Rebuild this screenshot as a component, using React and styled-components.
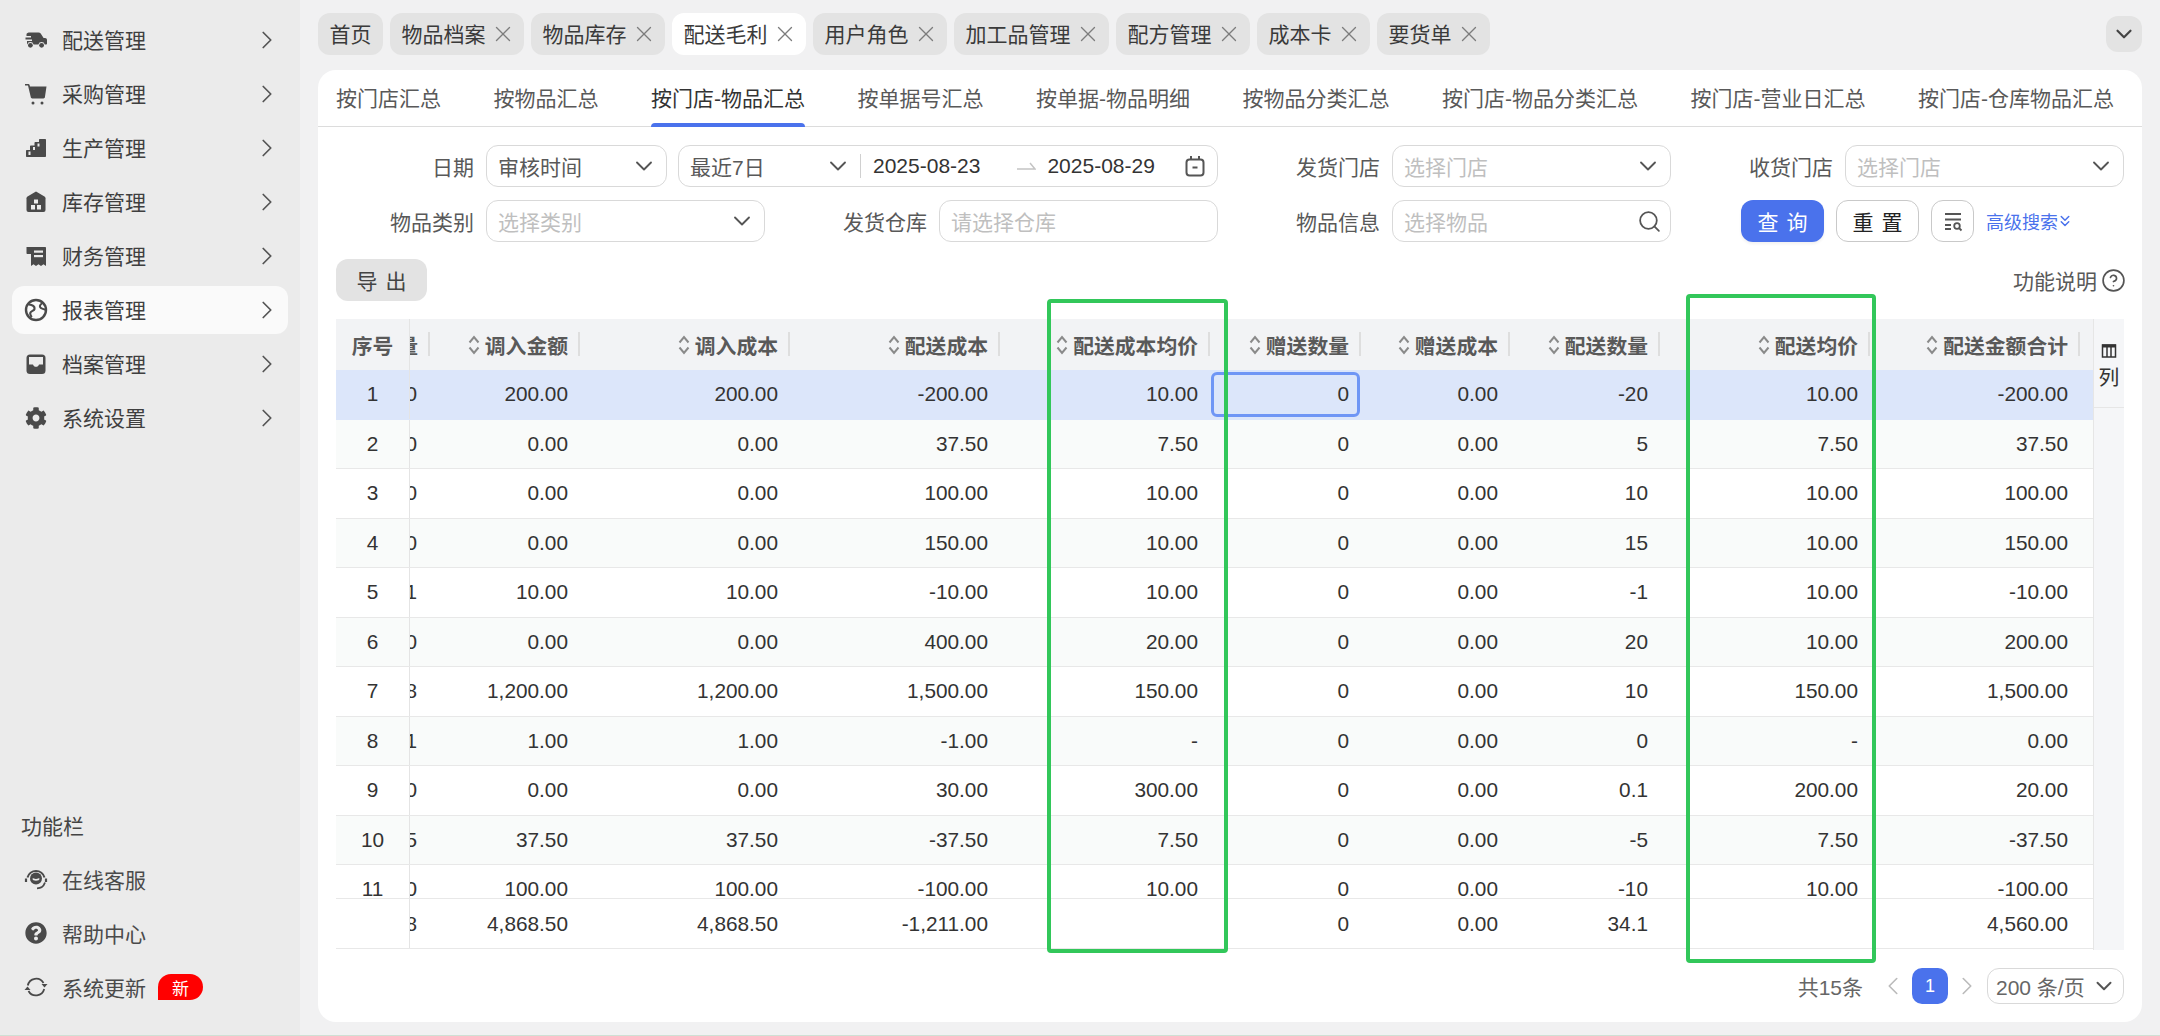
import React from "react";
import styled, { createGlobalStyle } from "styled-components";
import { ChevronRight, ChevronDown, ChevronLeft, ChevronsDown, X, Search, CircleHelp } from "lucide-react";
import { FaCog, FaQuestionCircle } from "react-icons/fa";

const SIDE_BG = "#ebebeb";

const navItems = [
  { label: "配送管理", icon: "truck" },
  { label: "采购管理", icon: "cart" },
  { label: "生产管理", icon: "stairs" },
  { label: "库存管理", icon: "house" },
  { label: "财务管理", icon: "receipt" },
  { label: "报表管理", icon: "globe", active: true },
  { label: "档案管理", icon: "inbox" },
  { label: "系统设置", icon: "gear" },
];

const pageTabs = [
  { label: "首页", fixed: true },
  { label: "物品档案" },
  { label: "物品库存" },
  { label: "配送毛利", active: true },
  { label: "用户角色" },
  { label: "加工品管理" },
  { label: "配方管理" },
  { label: "成本卡" },
  { label: "要货单" },
];

const subTabs = [
  "按门店汇总",
  "按物品汇总",
  "按门店-物品汇总",
  "按单据号汇总",
  "按单据-物品明细",
  "按物品分类汇总",
  "按门店-物品分类汇总",
  "按门店-营业日汇总",
  "按门店-仓库物品汇总",
];

const columns = [
  { title: "调入数量", width: 20, clip: true },
  { title: "调入金额", width: 150 },
  { title: "调入成本", width: 210 },
  { title: "配送成本", width: 210 },
  { title: "配送成本均价", width: 210 },
  { title: "赠送数量", width: 151 },
  { title: "赠送成本", width: 149 },
  { title: "配送数量", width: 150 },
  { title: "配送均价", width: 210 },
  { title: "配送金额合计", width: 210 },
];

const rows = [
  ["20", "200.00", "200.00", "-200.00", "10.00", "0", "0.00", "-20", "10.00", "-200.00"],
  ["0", "0.00", "0.00", "37.50", "7.50", "0", "0.00", "5", "7.50", "37.50"],
  ["0", "0.00", "0.00", "100.00", "10.00", "0", "0.00", "10", "10.00", "100.00"],
  ["0", "0.00", "0.00", "150.00", "10.00", "0", "0.00", "15", "10.00", "150.00"],
  ["1", "10.00", "10.00", "-10.00", "10.00", "0", "0.00", "-1", "10.00", "-10.00"],
  ["0", "0.00", "0.00", "400.00", "20.00", "0", "0.00", "20", "10.00", "200.00"],
  ["8", "1,200.00", "1,200.00", "1,500.00", "150.00", "0", "0.00", "10", "150.00", "1,500.00"],
  ["1", "1.00", "1.00", "-1.00", "-", "0", "0.00", "0", "-", "0.00"],
  ["0", "0.00", "0.00", "30.00", "300.00", "0", "0.00", "0.1", "200.00", "20.00"],
  ["5", "37.50", "37.50", "-37.50", "7.50", "0", "0.00", "-5", "7.50", "-37.50"],
  ["10", "100.00", "100.00", "-100.00", "10.00", "0", "0.00", "-10", "10.00", "-100.00"],
];

const summary = ["48", "4,868.50", "4,868.50", "-1,211.00", "", "0", "0.00", "34.1", "", "4,560.00"];

function NavIcon({ name }) {
  const hole = name === "globe" ? "#fafafa" : SIDE_BG;
  if (name === "gear") return <FaCog size={22} />;
  return (
    <svg width="24" height="24" viewBox="0 0 24 24" fill="currentColor">
      {name === "truck" && (
        <>
          <path d="M6 4.5h8.5c.9 0 1.7.4 2.2 1.1L19.6 10H21c1.2 0 2 .9 2 2v3.5c0 .6-.4 1-1 1h-1.2a3.3 3.3 0 0 0-6.4 0H9.6a3.3 3.3 0 0 0-6.4 0H3V13h5v-1.5H1.5V9.5H7V8H2.5V6.2C2.5 5.2 4 4.5 6 4.5z" />
          <circle cx="6.4" cy="17.3" r="2.4" />
          <circle cx="17.6" cy="17.3" r="2.4" />
        </>
      )}
      {name === "cart" && (
        <>
          <path d="M1 2h3.400c.6 0 1 .4 1.200 1L6 4.500h16.500l-1.600 10.800c-.1.7-.7 1.200-1.400 1.200H8.200c-.7 0-1.300-.5-1.400-1.200L4 3.600H1z" />
          <circle cx="9" cy="21" r="1.500" />
          <circle cx="18" cy="21" r="1.500" />
        </>
      )}
      {name === "stairs" && (
        <>
          <path d="M16 3h5c.6 0 1 .4 1 1v16c0 .6-.4 1-1 1H3c-.6 0-1-.4-1-1v-5c0-.6.4-1 1-1h3v-3.500c0-.6.4-1 1-1h3.500V7c0-.6.4-1 1-1H15V4c0-.6.4-1 1-1z" />
          <rect x="4.500" y="15.500" width="2" height="3.500" fill={hole} />
          <rect x="9" y="11" width="2" height="3" fill={hole} />
          <rect x="13.500" y="7.500" width="2" height="3" fill={hole} />
        </>
      )}
      {name === "house" && (
        <>
          <path d="M12 1.500l8.500 5c.6.4 1 1 1 1.800V20a2 2 0 0 1-2 2h-15a2 2 0 0 1-2-2V8.300c0-.8.4-1.400 1-1.800z" />
          <rect x="10" y="9.500" width="4" height="4" fill={hole} />
          <rect x="7" y="15" width="4" height="4.500" fill={hole} />
          <rect x="13" y="15" width="4" height="4.500" fill={hole} />
        </>
      )}
      {name === "receipt" && (
        <>
          <path d="M2.500 3h18.500c.6 0 1 .4 1 1v18l-2.500-1.800L17 22l-2.500-1.800L12 22l-2.500-1.800L7 22V10H3.500c-.6 0-1-.4-1-1z" />
          <rect x="10" y="6.500" width="9" height="2.200" fill={hole} />
          <rect x="10" y="11" width="9" height="2.200" fill={hole} />
        </>
      )}
      {name === "globe" && (
        <g fill="none" stroke="currentColor">
          <circle cx="12" cy="12" r="10" strokeWidth="2.400" />
          <path d="M5 6.500c3.500.3 6 2 5.500 4.500-.4 2-4 1.800-4.300 4.200-.1 1.300.5 2.800 1.500 4" strokeWidth="2.200" />
          <path d="M18.500 5c-2 1.200-3 2.500-2.500 4 .6 2 3.500 1.500 5.500 3" strokeWidth="2" />
        </g>
      )}
      {name === "inbox" && (
        <>
          <rect x="2.500" y="2.500" width="19" height="19.500" rx="3.500" />
          <path d="M5 5h14v7.500h-4c-.5 1.500-1.600 2.300-3 2.300s-2.500-.8-3-2.300H5z" fill={hole} />
        </>
      )}
    </svg>
  );
}

function AgentIcon() {
  return (
    <svg width="26" height="26" viewBox="0 0 24 24" fill="none" stroke="currentColor">
      <path d="M3.500 10.500a8.800 8.800 0 0 1 17 0" strokeWidth="2" />
      <path d="M2 11.500v3.500M22 11.500v3.500" strokeWidth="2.200" />
      <path d="M21 15.500c-1.200 3.500-4.500 5.800-8 5.800" strokeWidth="1.800" />
      <circle cx="12" cy="11.500" r="6" fill="currentColor" strokeWidth="0" />
      <path d="M9 11.500c.6 1.800 5.400 1.800 6 0" stroke={SIDE_BG} strokeWidth="1.800" />
    </svg>
  );
}

function UpdateIcon() {
  return (
    <svg width="26" height="26" viewBox="0 0 24 24" fill="currentColor" stroke="none">
      <g fill="none" stroke="currentColor" strokeWidth="1.800">
        <path d="M3.800 10.500A8.500 8.500 0 0 1 19.500 8" />
        <path d="M20.200 14A8.500 8.500 0 0 1 4.500 16" />
      </g>
      <path d="M17.500 9h6l-3 3.500z" />
      <path d="M.5 15h6l-3-3.500z" />
    </svg>
  );
}

function SortIcon() {
  return (
    <svg width="12" height="22" viewBox="0 0 12 22" fill="none" stroke="#8a8a8a" strokeWidth="2">
      <path d="M1.500 8.500L6 3l4.500 5.500" />
      <path d="M1.500 13.500L6 19l4.500-5.500" />
    </svg>
  );
}

function CalendarIcon() {
  return (
    <svg width="24" height="24" viewBox="0 0 24 24" fill="none" stroke="#555" strokeWidth="2">
      <rect x="3.500" y="5.500" width="17" height="16" rx="3" />
      <path d="M8 2v4M16 2v4M9.500 13.500h5" />
    </svg>
  );
}

function RangeArrow() {
  return (
    <svg width="20" height="12" viewBox="0 0 20 12" fill="none" stroke="#c4c4c4" strokeWidth="1.500">
      <path d="M1 9h18L14 3" />
    </svg>
  );
}

function FilterSearchIcon() {
  return (
    <svg width="22" height="22" viewBox="0 0 22 22" fill="none" stroke="#555" strokeWidth="1.800">
      <path d="M3 4h16M3 9.500h16M3 15h6M3 19h6" />
      <circle cx="15" cy="16" r="2.800" />
      <path d="M17 18l2.500 2.500" />
    </svg>
  );
}

function ColumnsIcon() {
  return (
    <svg width="16" height="16" viewBox="0 0 16 16" fill="none" stroke="#333" strokeWidth="1.500">
      <rect x="1.500" y="2" width="13" height="12" />
      <path d="M1 3h14" strokeWidth="3" />
      <path d="M6 3v11M10 3v11" />
    </svg>
  );
}

function SelectArrow() {
  return <ArrowBox size={28} strokeWidth={1.6} color="#555" />;
}

export default function App() {
  return (
    <Page>
      <GlobalStyle />
      <Sidebar>
        <NavList>
          {navItems.map((item) => (
            <NavItem key={item.label} $active={item.active}>
              <NavIconBox>
                <NavIcon name={item.icon} />
              </NavIconBox>
              <NavLabel>{item.label}</NavLabel>
              <ChevronRight size={30} strokeWidth={1.4} color="#555" />
            </NavItem>
          ))}
        </NavList>
        <ToolList>
          <ToolTitle>功能栏</ToolTitle>
          <ToolItem>
            <NavIconBox>
              <AgentIcon />
            </NavIconBox>
            在线客服
          </ToolItem>
          <ToolItem>
            <NavIconBox>
              <FaQuestionCircle size={22} />
            </NavIconBox>
            帮助中心
          </ToolItem>
          <ToolItem>
            <NavIconBox>
              <UpdateIcon />
            </NavIconBox>
            系统更新
            <NewBadge>新</NewBadge>
          </ToolItem>
        </ToolList>
      </Sidebar>

      <Main>
        <TabStrip>
          <TabList>
            {pageTabs.map((tab) => (
              <PageTab key={tab.label} $active={tab.active}>
                {tab.label}
                {!tab.fixed && <TabClose size={26} strokeWidth={1.25} color="#7d7d7d" />}
              </PageTab>
            ))}
          </TabList>
          <TabMenu>
            <ChevronDown size={26} strokeWidth={2} color="#444" />
          </TabMenu>
        </TabStrip>

        <Card>
          <SubTabs>
            {subTabs.map((tab) => (
              <SubTab key={tab} $active={tab === "按门店-物品汇总"}>
                {tab}
              </SubTab>
            ))}
          </SubTabs>

          <CardBody>
            <FilterGrid>
              <FilterCell $wide>
                <FieldLabel>日期</FieldLabel>
                <Field $w={181}>
                  <FieldValue>审核时间</FieldValue>
                  <SelectArrow />
                </Field>
                <RangeField>
                  <RangeRecent>最近7日</RangeRecent>
                  <SelectArrow />
                  <RangeDivider />
                  <RangeDate>2025-08-23</RangeDate>
                  <RangeArrowBox>
                    <RangeArrow />
                  </RangeArrowBox>
                  <RangeDate>2025-08-29</RangeDate>
                  <RangeCalendar>
                    <CalendarIcon />
                  </RangeCalendar>
                </RangeField>
              </FilterCell>
              <FilterCell>
                <FieldLabel>发货门店</FieldLabel>
                <Field>
                  <Placeholder>选择门店</Placeholder>
                  <SelectArrow />
                </Field>
              </FilterCell>
              <FilterCell>
                <FieldLabel>收货门店</FieldLabel>
                <Field>
                  <Placeholder>选择门店</Placeholder>
                  <SelectArrow />
                </Field>
              </FilterCell>

              <FilterCell>
                <FieldLabel>物品类别</FieldLabel>
                <Field>
                  <Placeholder>选择类别</Placeholder>
                  <SelectArrow />
                </Field>
              </FilterCell>
              <FilterCell>
                <FieldLabel>发货仓库</FieldLabel>
                <Field>
                  <Placeholder>请选择仓库</Placeholder>
                </Field>
              </FilterCell>
              <FilterCell>
                <FieldLabel>物品信息</FieldLabel>
                <Field>
                  <Placeholder>选择物品</Placeholder>
                  <Search size={25} strokeWidth={1.7} color="#555" />
                </Field>
              </FilterCell>
              <ActionCell>
                <PrimaryButton>查 询</PrimaryButton>
                <OutlineButton>重 置</OutlineButton>
                <IconButton>
                  <FilterSearchIcon />
                </IconButton>
                <AdvancedLink>
                  高级搜索
                  <AdvancedArrow size={18} strokeWidth={2} />
                </AdvancedLink>
              </ActionCell>
            </FilterGrid>

            <Toolbar>
              <ExportButton>导 出</ExportButton>
              <HelpLink>
                功能说明
                <HelpIcon size={25} strokeWidth={1.6} color="#555" />
              </HelpLink>
            </Toolbar>

            <TableWrap>
              <TableMain>
                <HeadRow>
                  <IndexHead>序号</IndexHead>
                  {columns.map((col) => (
                    <HeadCell key={col.title} $w={col.width}>
                      {!col.clip && <SortIcon />}
                      <span>{col.clip ? "数量" : col.title}</span>
                    </HeadCell>
                  ))}
                  <EndCell />
                </HeadRow>
                <RowsBox>
                  {rows.map((row, i) => (
                    <BodyRow key={i} $selected={i === 0} $striped={i % 2 === 1}>
                      <IndexCell>{i + 1}</IndexCell>
                      {row.map((val, j) => (
                        <DataCell key={j} $w={columns[j].width} $clip={columns[j].clip} $focused={i === 0 && j === 5}>
                          {val}
                        </DataCell>
                      ))}
                      <EndCell />
                    </BodyRow>
                  ))}
                </RowsBox>
                <SummaryRow>
                  <IndexCell />
                  {summary.map((val, j) => (
                    <DataCell key={j} $w={columns[j].width} $clip={columns[j].clip}>
                      {val}
                    </DataCell>
                  ))}
                  <EndCell />
                </SummaryRow>
              </TableMain>
              <ColumnStrip>
                <ColumnButton>
                  <ColumnsIcon />
                  <span>列</span>
                </ColumnButton>
              </ColumnStrip>
            </TableWrap>

            <Pager>
              <PagerTotal>共15条</PagerTotal>
              <ChevronLeft size={30} strokeWidth={1.3} color="#bbb" />
              <PagerCurrent>1</PagerCurrent>
              <ChevronRight size={30} strokeWidth={1.3} color="#bbb" />
              <PagerSize>
                200 条/页
                <ChevronDown size={26} strokeWidth={1.8} color="#555" />
              </PagerSize>
            </Pager>
          </CardBody>
        </Card>
      </Main>

      <Highlight $left={1047} $top={299} $w={181} $h={654} />
      <Highlight $left={1686} $top={294} $w={190} $h={669} />
    </Page>
  );
}

const GlobalStyle = createGlobalStyle`
  html, body {
    margin: 0;
    height: 100%;
    overflow: hidden;
  }
  body {
    font-family: "Liberation Sans", "Noto Sans CJK SC", sans-serif;
    font-size: 21px;
    color: #333;
  }
  #root {
    height: 100%;
  }
  * {
    box-sizing: border-box;
  }
`;

const Page = styled.div`
  position: relative;
  display: flex;
  height: 100%;
  background: #f1f1f2;
  border-bottom: 1px solid #cfe0d4;
`;

const Sidebar = styled.aside`
  width: 300px;
  flex: none;
  display: flex;
  flex-direction: column;
  justify-content: space-between;
  padding: 16px 12px 24px;
  background: ${SIDE_BG};
`;

const NavList = styled.nav`
  display: flex;
  flex-direction: column;
  gap: 6px;
`;

const NavItem = styled.div`
  display: flex;
  align-items: center;
  gap: 14px;
  height: 48px;
  padding: 0 6px 0 12px;
  border-radius: 12px;
  color: #4a4a4a;
  background: ${(p) => (p.$active ? "#fafafa" : "transparent")};
`;

const NavIconBox = styled.span`
  display: flex;
  align-items: center;
  justify-content: center;
  width: 24px;
  flex: none;
`;

const NavLabel = styled.span`
  flex: 1;
  margin-top: -2px;
  color: #3f3f3f;
`;

const ToolList = styled.div`
  display: flex;
  flex-direction: column;
  gap: 6px;
`;

const ToolTitle = styled.div`
  display: flex;
  align-items: center;
  height: 48px;
  padding-left: 9px;
  color: #444;
`;

const ToolItem = styled.div`
  display: flex;
  align-items: center;
  gap: 14px;
  height: 48px;
  padding-left: 12px;
  color: #4a4a4a;
`;

const NewBadge = styled.span`
  display: flex;
  align-items: center;
  justify-content: center;
  width: 45px;
  height: 26px;
  margin-left: -2px;
  border-radius: 13px 13px 13px 0;
  background: #ff0000;
  color: #fff;
  font-size: 17px;
`;

const Main = styled.main`
  flex: 1;
  min-width: 0;
  display: flex;
  flex-direction: column;
  padding: 13px 18px 13px;
`;

const TabStrip = styled.div`
  display: flex;
  align-items: center;
  justify-content: space-between;
  height: 42px;
  margin-bottom: 15px;
`;

const TabList = styled.div`
  display: flex;
  gap: 7px;
`;

const PageTab = styled.div`
  display: flex;
  align-items: center;
  gap: 9px;
  height: 42px;
  padding: 0 11.5px 2px;
  border-radius: 12px;
  color: #3a3a3a;
  background: ${(p) => (p.$active ? "#fff" : "#e3e3e3")};
`;

const TabClose = styled(X)`
  margin: 2px -3px 0 -5px;
`;

const TabMenu = styled.div`
  display: flex;
  align-items: center;
  justify-content: center;
  width: 36px;
  height: 36px;
  border-radius: 12px;
  background: #e3e3e3;
`;

const Card = styled.section`
  flex: 1;
  min-height: 0;
  display: flex;
  flex-direction: column;
  border-radius: 18px;
  background: #fff;
`;

const SubTabs = styled.div`
  display: flex;
  gap: 52.5px;
  height: 57px;
  padding: 0 18px;
  border-bottom: 1px solid #dcdcdc;
`;

const SubTab = styled.div`
  position: relative;
  line-height: 57px;
  white-space: nowrap;
  color: ${(p) => (p.$active ? "#333" : "#595959")};
  &::after {
    content: "";
    display: ${(p) => (p.$active ? "block" : "none")};
    position: absolute;
    left: 0;
    right: 0;
    bottom: -1px;
    height: 4px;
    border-radius: 4px 4px 0 0;
    background: #4a72ec;
  }
`;

const CardBody = styled.div`
  flex: 1;
  display: flex;
  flex-direction: column;
  padding: 18px 18px 0;
`;

const FilterGrid = styled.div`
  display: grid;
  grid-template-columns: 429px 453px 453px 453px;
  row-gap: 13px;
`;

const FilterCell = styled.div`
  display: flex;
  align-items: center;
  justify-content: flex-end;
  gap: 11px;
  grid-column: ${(p) => (p.$wide ? "span 2" : "auto")};
`;

const FieldLabel = styled.span`
  margin-right: 1px;
  color: #595959;
  white-space: nowrap;
`;

const Field = styled.div`
  display: flex;
  align-items: center;
  justify-content: space-between;
  width: ${(p) => p.$w || 279}px;
  height: 42px;
  padding: 0 8px 0 11px;
  border: 1px solid #d9d9d9;
  border-radius: 12px;
  background: #fff;
  white-space: nowrap;
`;

const RangeField = styled(Field)`
  width: 540px;
  justify-content: flex-start;
`;

const ArrowBox = styled(ChevronDown)`
  flex: none;
`;

const FieldValue = styled.span`
  color: #595959;
`;

const Placeholder = styled.span`
  color: #bfbfbf;
`;

const RangeRecent = styled.span`
  width: 134px;
  color: #595959;
`;

const RangeDivider = styled.span`
  width: 1px;
  height: 24px;
  margin: 0 12px 0 8px;
  background: #d0d0d0;
`;

const RangeDate = styled.span`
  color: #333;
`;

const RangeArrowBox = styled.span`
  display: flex;
  margin: 0 11px 0 36px;
`;

const RangeCalendar = styled.span`
  display: flex;
  margin-left: 28px;
`;

const ActionCell = styled.div`
  display: flex;
  align-items: center;
  gap: 12px;
  padding-left: 70px;
`;

const PrimaryButton = styled.button`
  width: 83px;
  height: 42px;
  border: 0;
  border-radius: 12px;
  background: #4a72ec;
  color: #fff;
  font: inherit;
  word-spacing: 2px;
  box-shadow: 0 2px 3px rgba(0, 0, 0, 0.06);
`;

const OutlineButton = styled.button`
  width: 83px;
  height: 42px;
  border: 1px solid #c9c9c9;
  border-radius: 12px;
  background: #fff;
  color: #222;
  font: inherit;
  word-spacing: 2px;
`;

const IconButton = styled.button`
  display: flex;
  align-items: center;
  justify-content: center;
  width: 43px;
  height: 42px;
  padding: 0;
  border: 1px solid #c9c9c9;
  border-radius: 12px;
  background: #fff;
`;

const AdvancedLink = styled.span`
  display: flex;
  align-items: center;
  color: #4a72ec;
  font-size: 18px;
  white-space: nowrap;
`;

const AdvancedArrow = styled(ChevronsDown)`
  margin: 0 -2px;
`;

const Toolbar = styled.div`
  display: flex;
  align-items: center;
  justify-content: space-between;
  height: 42px;
  margin: 17px 0 18px;
`;

const ExportButton = styled.button`
  width: 91px;
  height: 42px;
  border: 0;
  border-radius: 12px;
  background: #e3e3e3;
  color: #444;
  font: inherit;
  word-spacing: 2px;
`;

const HelpLink = styled.span`
  display: flex;
  align-items: center;
  gap: 4px;
  color: #595959;
`;

const HelpIcon = styled(CircleHelp)`
  margin-right: -2px;
`;

const TableWrap = styled.div`
  display: flex;
  height: 631px;
  font-size: 20.8px;
`;

const TableMain = styled.div`
  width: 1757px;
  flex: none;
  display: flex;
  flex-direction: column;
`;

const HeadRow = styled.div`
  display: flex;
  height: 51px;
  flex: none;
  background: #f2f3f5;
`;

const IndexHead = styled.div`
  width: 74px;
  flex: none;
  display: flex;
  align-items: center;
  justify-content: center;
  border-right: 1px solid #e4e4e4;
  font-weight: 700;
  color: #595959;
`;

const HeadCell = styled.div`
  position: relative;
  width: ${(p) => p.$w}px;
  flex: none;
  display: flex;
  align-items: center;
  justify-content: flex-end;
  gap: 5px;
  padding-right: 12px;
  overflow: hidden;
  font-weight: 700;
  color: #595959;
  white-space: nowrap;
  span {
    flex: none;
  }
  &::after {
    content: "";
    position: absolute;
    right: 0;
    top: 13px;
    width: 2px;
    height: 24px;
    background: #dedede;
  }
`;

const EndCell = styled.div`
  flex: 1;
`;

const RowsBox = styled.div`
  height: 528px;
  flex: none;
  overflow: hidden;
`;

const BodyRow = styled.div`
  display: flex;
  height: 49.5px;
  border-bottom: 1px solid ${(p) => (p.$selected ? "transparent" : "#e8e8e8")};
  background: ${(p) => (p.$selected ? "#dce6fa" : p.$striped ? "#f9fbfa" : "#fff")};
`;

const SummaryRow = styled.div`
  display: flex;
  height: 51px;
  flex: none;
  border-top: 1px solid #e8e8e8;
  border-bottom: 1px solid #e8e8e8;
`;

const IndexCell = styled.div`
  width: 74px;
  flex: none;
  display: flex;
  align-items: center;
  justify-content: center;
  border-right: 1px solid #e4e4e4;
`;

const DataCell = styled.div`
  position: relative;
  width: ${(p) => p.$w}px;
  flex: none;
  display: flex;
  align-items: center;
  justify-content: flex-end;
  padding-right: ${(p) => (p.$clip ? 13 : 12)}px;
  overflow: hidden;
  white-space: nowrap;
  &::after {
    content: "";
    display: ${(p) => (p.$focused ? "block" : "none")};
    position: absolute;
    inset: 2px 1px;
    border: 3px solid #6f96f5;
    border-radius: 6px;
  }
`;

const ColumnStrip = styled.div`
  flex: 1;
  border-left: 1px solid #e6e6e6;
  background: #f5f6f8;
`;

const ColumnButton = styled.div`
  height: 89px;
  display: flex;
  flex-direction: column;
  align-items: center;
  justify-content: center;
  gap: 2px;
  border-bottom: 1px solid #e6e6e6;
  padding-top: 8px;
  color: #333;
`;

const Pager = styled.div`
  display: flex;
  align-items: center;
  justify-content: flex-end;
  height: 36px;
  margin-top: 18px;
`;

const PagerTotal = styled.span`
  margin-right: 15px;
  color: #666;
`;

const PagerCurrent = styled.span`
  display: flex;
  align-items: center;
  justify-content: center;
  width: 36px;
  height: 36px;
  margin: 0 4px;
  border-radius: 10px;
  background: #4a72ec;
  color: #fff;
  font-size: 18px;
`;

const PagerSize = styled.div`
  display: flex;
  align-items: center;
  justify-content: space-between;
  width: 137px;
  height: 36px;
  margin-left: 5px;
  padding: 0 6px 0 8px;
  border: 1px solid #d9d9d9;
  border-radius: 12px;
  color: #666;
  white-space: nowrap;
`;

const Highlight = styled.div`
  position: absolute;
  left: ${(p) => p.$left}px;
  top: ${(p) => p.$top}px;
  width: ${(p) => p.$w}px;
  height: ${(p) => p.$h}px;
  border: 4px solid #32c75a;
  border-radius: 4px;
  pointer-events: none;
`;
